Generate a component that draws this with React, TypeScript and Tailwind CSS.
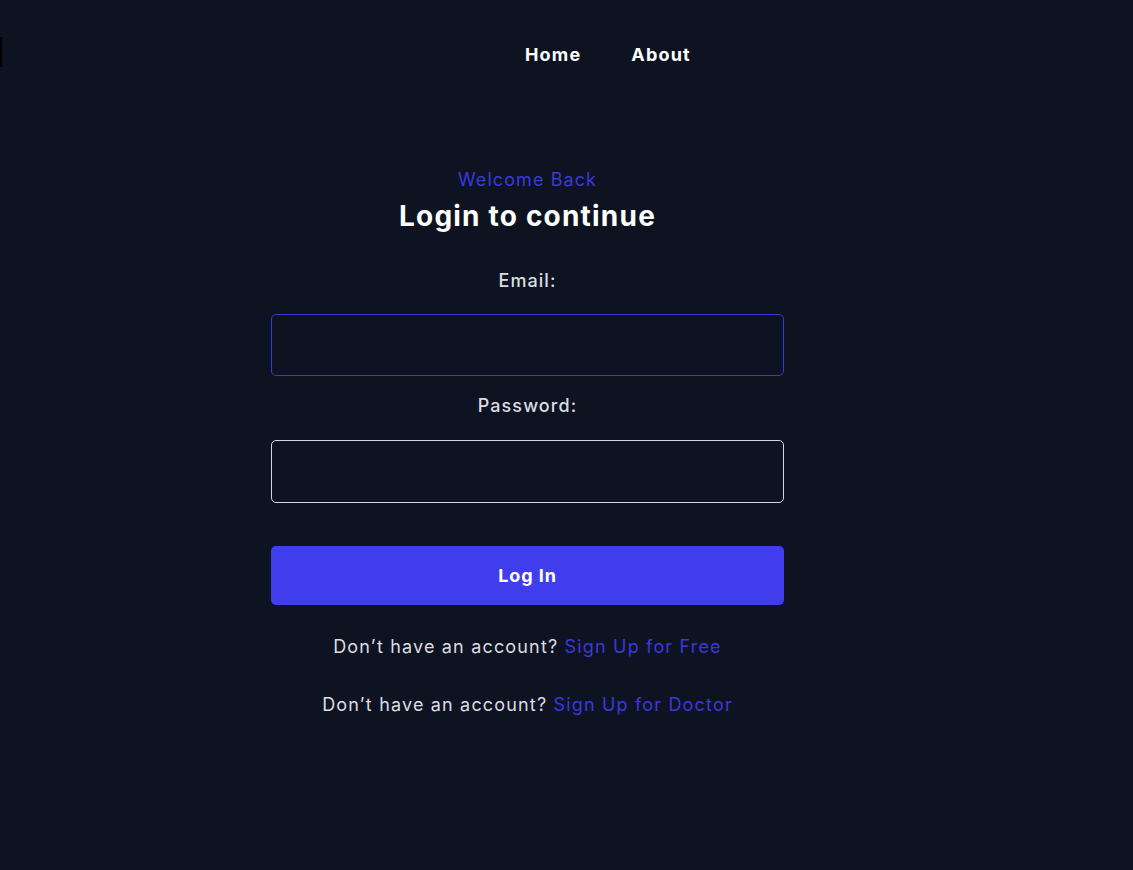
export default function App() {
  const font = { fontFamily: "Inter, 'Noto Sans', sans-serif" };
  return (
    <div className="min-h-[870px] w-full bg-[#0e1322] text-white relative" style={font}>
      <div className="absolute left-0 top-[37px] h-[30px] w-[2px] bg-black" />
      <nav className="flex h-[108px] items-start pt-[43px] pl-[525px] gap-[50px] text-[18px] font-bold tracking-[0.065em]">
        <a className="leading-[24px]">Home</a>
        <a className="leading-[24px]">About</a>
      </nav>
      <div className="ml-[271px] w-[513px] flex flex-col items-center pt-[60px]">
        <div className="text-[18px] leading-[24px] text-[#3b38dc] tracking-[0.06em]">Welcome Back</div>
        <h1 className="mt-[6px] text-[28px] leading-[36px] font-bold tracking-[0.043em]">Login to continue</h1>
        <label className="mt-[35px] text-[18px] leading-[24px] text-[#dcdde3] font-medium tracking-[0.06em]">Email:</label>
        <input className="mt-[21px] h-[62px] w-full rounded-[5px] border border-[#3b38dc] bg-transparent outline-none" />
        <label className="mt-[18px] text-[18px] leading-[24px] text-[#dcdde3] font-medium tracking-[0.06em]">Password:</label>
        <input type="password" className="mt-[22px] h-[63px] w-full rounded-[5px] border border-[#d4d4e4] bg-transparent outline-none" />
        <button className="mt-[43px] h-[59px] w-full rounded-[5px] bg-[#3f3dec] text-[18px] font-bold text-white tracking-[0.05em]">Log In</button>
        <p className="mt-[30px] text-[18px] leading-[24px] text-[#dcdde3] tracking-[0.065em]">
          Don’t have an account? <a className="text-[#3b38dc]">Sign Up for Free</a>
        </p>
        <p className="mt-[34px] text-[18px] leading-[24px] text-[#dcdde3] tracking-[0.065em]">
          Don’t have an account? <a className="text-[#3b38dc]">Sign Up for Doctor</a>
        </p>
      </div>
    </div>
  );
}
